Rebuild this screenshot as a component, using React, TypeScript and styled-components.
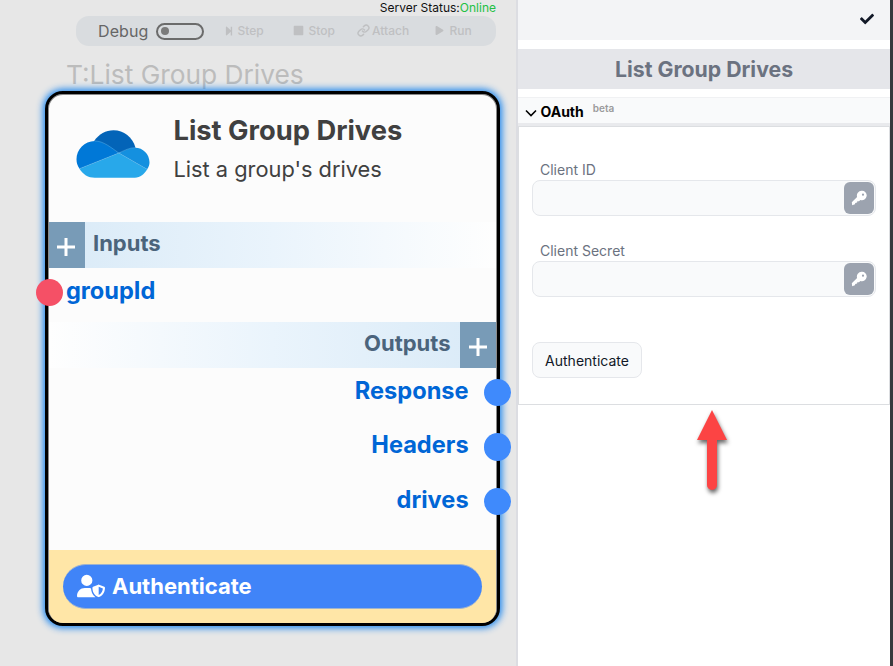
import React from "react";
import styled, { createGlobalStyle } from "styled-components";
import { FaStepForward, FaStop, FaPlay, FaCheck } from "react-icons/fa";
import { FaUserShield } from "react-icons/fa6";
import { Link } from "lucide-react";

const GlobalStyle = createGlobalStyle`
  * { box-sizing: border-box; }
  body {
    margin: 0;
    overflow: hidden;
    font-family: Inter, "Liberation Sans", sans-serif;
  }
`;

const Page = styled.div`
  display: flex;
  width: 893px;
  height: 666px;
  background: #fff;
`;

const Canvas = styled.main`
  display: flex;
  flex-direction: column;
  width: 518px;
  height: 666px;
  background: #e7e7e7;
  border-right: 2px solid #dcdde2;
`;

const Status = styled.div`
  height: 16px;
  padding-right: 20px;
  text-align: right;
  font-size: 12px;
  line-height: 15px;
  color: #111;
`;

const Online = styled.span`
  color: #22c043;
`;

const Toolbar = styled.div`
  display: flex;
  align-items: center;
  width: 420px;
  height: 30px;
  margin-left: 76px;
  padding-left: 22px;
  border-radius: 13px;
  background: #d9dcdf;
`;

const DebugLabel = styled.span`
  width: 58px;
  font-size: 16px;
  line-height: 20px;
  letter-spacing: 0.1px;
  color: #666;
`;

const Toggle = styled.span`
  display: flex;
  align-items: center;
  width: 48px;
  height: 17px;
  margin-right: 20px;
  padding-left: 3px;
  border: 2px solid #6b6b6b;
  border-radius: 9px;
`;

const Knob = styled.span`
  width: 8px;
  height: 8px;
  border-radius: 50%;
  background: #7b7b7b;
`;

const Tool = styled.span<{ $width: number; $gap: number }>`
  display: flex;
  align-items: center;
  gap: ${(p) => p.$gap}px;
  width: ${(p) => p.$width}px;
  font-size: 12px;
  font-weight: 500;
  line-height: 16px;
  color: #bfc0c2;

  svg {
    margin-top: -1px;
  }
`;

const FlowTitle = styled.div`
  height: 45px;
  padding: 13px 0 0 66px;
  font-size: 26.3px;
  line-height: 32px;
  white-space: nowrap;
  color: #bcbcbc;
`;

const Card = styled.section`
  position: relative;
  display: flex;
  flex-direction: column;
  width: 455px;
  height: 535px;
  margin-left: 45px;
  padding: 1px 1px 0;
  border: 3px solid #000;
  border-radius: 18px;
  background: #fcfcfc;
  box-shadow: 0 0 7px 2px #1c86ee, inset 0 0 0 1px #8a8a8a;
`;

const CardHeader = styled.header`
  display: flex;
  height: 127px;
  padding: 35px 0 0 27px;
`;

const CardHeading = styled.div`
  margin: -15px 0 0 23.5px;
  white-space: nowrap;
  color: #404040;
`;

const CardTitle = styled.div`
  font-size: 27.3px;
  font-weight: 700;
  line-height: 32px;
`;

const CardSubtitle = styled.div`
  margin-top: 6px;
  font-size: 21.8px;
  line-height: 32px;
`;

const Band = styled.div<{ $side: "left" | "right" }>`
  display: flex;
  flex-direction: ${(p) => (p.$side === "left" ? "row" : "row-reverse")};
  height: 46px;
  background: linear-gradient(
    to ${(p) => (p.$side === "left" ? "right" : "left")},
    #d9eaf7 0%,
    #eaf4fc 50%,
    #fefefe 100%
  );
`;

const AddButton = styled.span<{ $inset?: number }>`
  display: flex;
  align-items: center;
  justify-content: center;
  width: 36px;
  height: 46px;
  padding: 3px ${(p) => p.$inset ?? 0}px 0 0;
  background: #789bb7;
`;

const BandLabel = styled.span`
  padding: 0 9.5px 0 8px;
  font-size: 22px;
  font-weight: 700;
  line-height: 43px;
  color: #4b647c;
`;

const InputPort = styled.div`
  display: flex;
  align-items: center;
  gap: 2.5px;
  height: 54px;
  margin-left: -13px;
  padding-bottom: 5.4px;
`;

const Outputs = styled.div`
  display: flex;
  flex-direction: column;
  height: 182px;
  margin-top: -3px;
  padding-top: 0.4px;
`;

const OutputPort = styled.div`
  display: flex;
  align-items: center;
  justify-content: flex-end;
  gap: 15px;
  height: 54.4px;
  margin-right: -15px;
`;

const Dot = styled.span<{ $color: string }>`
  width: 27.4px;
  height: 27.4px;
  flex: none;
  border-radius: 50%;
  background: ${(p) => p.$color};
`;

const PortName = styled.span<{ $lift?: number }>`
  font-size: 23.6px;
  font-weight: 700;
  line-height: 30px;
  padding-bottom: ${(p) => p.$lift ?? 3.4}px;
  color: #0066d6;
`;

const CardFooter = styled.footer`
  display: flex;
  height: 73px;
  margin-top: auto;
  padding: 14px 14px;
  border-radius: 0 0 14px 14px;
  background: #ffe6a7;
`;

const LoginButton = styled.div`
  display: flex;
  align-items: center;
  gap: 7px;
  width: 419px;
  height: 45px;
  padding: 0 0 1px 14px;
  border: 1px solid #9fb3ce;
  border-width: 1px 0;
  border-radius: 22.5px;
  background: #4084f8;
  color: #fff;
  font-size: 22px;
  font-weight: 700;
  line-height: 28px;
`;

const Panel = styled.aside`
  display: flex;
  flex-direction: column;
  width: 375px;
  height: 666px;
  border-right: 3px solid #3a3a3c;
  background: #fff;
`;

const TopBar = styled.div`
  display: flex;
  justify-content: flex-end;
  height: 40px;
  padding: 12px 16px 0 0;
  background: #f3f4f6;
  color: #111827;
`;

const PanelTitle = styled.div`
  height: 40px;
  margin-top: 9px;
  background: #e5e6ea;
  text-align: center;
  font-size: 21.25px;
  font-weight: 700;
  line-height: 40px;
  color: #6b7280;
`;

const SectionHead = styled.div`
  display: flex;
  height: 29px;
  margin-top: 8px;
  padding: 4px 0 0 7px;
  border-top: 1px solid #f0f1f3;
  border-bottom: 3px solid #e9eaed;
  background: #f9fafb;
  font-size: 14px;
  font-weight: 700;
  line-height: 20px;
  color: #000;
`;

const Beta = styled.span`
  margin-left: 9px;
  font-size: 10px;
  font-weight: 600;
  line-height: 12px;
  color: #9b9b9b;
`;

const Form = styled.div`
  display: flex;
  flex-direction: column;
  height: 279px;
  padding: 34px 13px 0;
  border: 1px solid #dcdee1;
`;

const Field = styled.div`
  height: 81px;
`;

const FieldLabel = styled.label`
  display: block;
  padding-left: 8px;
  height: 19px;
  font-size: 14px;
  line-height: 18px;
  color: #6b7280;
`;

const Input = styled.div`
  display: flex;
  justify-content: flex-end;
  width: 344px;
  height: 36px;
  padding: 1px;
  border: 1px solid #e5e7eb;
  border-radius: 8px;
  background: #f9fafb;
`;

const KeyButton = styled.span`
  display: flex;
  align-items: center;
  justify-content: center;
  width: 30px;
  height: 32px;
  border-radius: 6px;
  background: #9ca3af;
  color: #fff;
`;

const AuthButton = styled.div`
  width: 110px;
  height: 36px;
  margin-top: 19px;
  border: 1px solid #e5e7eb;
  border-radius: 8px;
  background: #f9fafb;
  text-align: center;
  font-size: 14px;
  line-height: 36px;
  color: #111827;
`;

const Arrow = styled.svg`
  margin: 1px 0 0 170px;
  overflow: visible;
  filter: drop-shadow(1px 3px 2px rgba(0, 0, 0, 0.6));
`;

const Cloud = () => (
  <svg width="74" height="48" viewBox="140 134 221 144">
    <path fill="#0364b8" d="M194 167C208 147 229 135 252 135C283 135 309 156 318 187L300 195L268 203Z" />
    <path fill="#0078d7" d="M196 167C165 167 141 192 141 222C141 233 144 242 150 250L268 203C245 187 222 167 196 167Z" />
    <path fill="#1490df" d="M317 187C300 187 285 195 268 203L353 252C358 245 360 238 360 231C360 206 340 187 317 187Z" />
    <path fill="#28a8ea" d="M268 203L150 250C160 267 176 277 196 277H316C332 277 345 266 353 252Z" />
    <path fill="none" stroke="#5baee5" strokeWidth="1.5" d="M196 167C222 167 245 187 268 203L353 252M150 250L268 203C285 195 300 187 317 187" />
  </svg>
);

const Key = () => (
  <svg width="16" height="16" viewBox="0 0 16 16">
    <path
      fill="#fff"
      fillRule="evenodd"
      d="M10.6 .8A4.7 4.7 0 1 1 9.4 9.9L8 11.2L6.3 11.2L6.1 12.6L4.3 12.9L3.9 14.3L1.2 15.3L.8 12.2L6.1 6.9A4.7 4.7 0 0 1 10.6 .8ZM12 3.6A1.1 1.1 0 1 0 12 5.8A1.1 1.1 0 1 0 12 3.6Z"
    />
  </svg>
);

const Plus = () => (
  <svg width="18" height="18" viewBox="0 0 18 18">
    <path d="M9 0V18M0 9H18" stroke="#fff" strokeWidth="3" />
  </svg>
);

const Chevron = () => (
  <svg width="15.5" height="22" viewBox="0 0 15.5 22">
    <path d="M1 8.5L6 13.5L11 8.5" fill="none" stroke="#000" strokeWidth="1.6" />
  </svg>
);

const outputs = ["Response", "Headers", "drives"];
const fields = ["Client ID", "Client Secret"];

export default function App() {
  return (
    <Page>
      <GlobalStyle />
      <Canvas>
        <Status>Server Status:<Online>Online</Online></Status>
        <Toolbar>
          <DebugLabel>Debug</DebugLabel>
          <Toggle><Knob /></Toggle>
          <Tool $width={69} $gap={3.5}><FaStepForward size={10} />Step</Tool>
          <Tool $width={63.5} $gap={4.5}><FaStop size={11} />Stop</Tool>
          <Tool $width={78.5} $gap={2.5}><Link size={13} strokeWidth={2.6} />Attach</Tool>
          <Tool $width={50} $gap={5.5}><FaPlay size={9} />Run</Tool>
        </Toolbar>
        <FlowTitle>T:List Group Drives</FlowTitle>
        <Card>
          <CardHeader>
            <Cloud />
            <CardHeading>
              <CardTitle>List Group Drives</CardTitle>
              <CardSubtitle>List a group's drives</CardSubtitle>
            </CardHeading>
          </CardHeader>
          <Band $side="left">
            <AddButton $inset={2}><Plus /></AddButton>
            <BandLabel>Inputs</BandLabel>
          </Band>
          <InputPort>
            <Dot $color="#f55066" />
            <PortName $lift={2}>groupId</PortName>
          </InputPort>
          <Band $side="right">
            <AddButton><Plus /></AddButton>
            <BandLabel>Outputs</BandLabel>
          </Band>
          <Outputs>
            {outputs.map((name) => (
              <OutputPort key={name}>
                <PortName>{name}</PortName>
                <Dot $color="#3f8afc" />
              </OutputPort>
            ))}
          </Outputs>
          <CardFooter>
            <LoginButton><FaUserShield size={28} />Authenticate</LoginButton>
          </CardFooter>
        </Card>
      </Canvas>
      <Panel>
        <TopBar><FaCheck size={14} /></TopBar>
        <PanelTitle>List Group Drives</PanelTitle>
        <SectionHead>
          <Chevron />
          OAuth
          <Beta>beta</Beta>
        </SectionHead>
        <Form>
          {fields.map((label) => (
            <Field key={label}>
              <FieldLabel>{label}</FieldLabel>
              <Input><KeyButton><Key /></KeyButton></Input>
            </Field>
          ))}
          <AuthButton>Authenticate</AuthButton>
        </Form>
        <Arrow width="50" height="90" viewBox="688 406 50 90">
          <path d="M712 410L727 440H717V485A5 5 0 0 1 707 485V440H697Z" fill="#fc4444" />
        </Arrow>
      </Panel>
    </Page>
  );
}
